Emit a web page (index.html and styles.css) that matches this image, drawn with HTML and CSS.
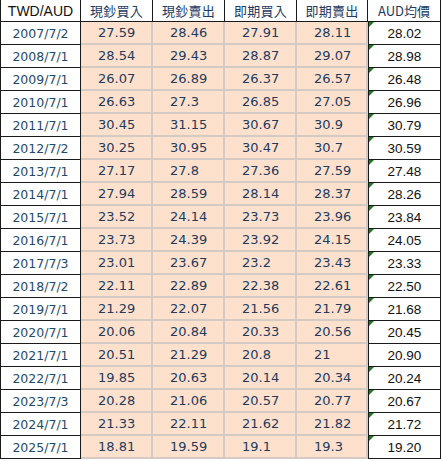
FILE: index.html
```html
<!DOCTYPE html>
<html>
<head>
<meta charset="utf-8">
<link rel="stylesheet" href="styles.css">
</head>
<body>
<table class="rates">
  <colgroup>
    <col class="c-date"><col class="c-num"><col class="c-num"><col class="c-num"><col class="c-num5"><col class="c-avg">
  </colgroup>
  <thead>
    <tr class="head">
      <th class="h-first">TWD/AUD</th>
      <th class="h-cjk">現鈔買入</th>
      <th class="h-cjk">現鈔賣出</th>
      <th class="h-cjk">即期買入</th>
      <th class="h-cjk">即期賣出</th>
      <th class="h-cjk h-last">AUD均價</th>
    </tr>
  </thead>
  <tbody>
    <tr><td class="date">2007/7/2</td><td class="num">27.59</td><td class="num">28.46</td><td class="num">27.91</td><td class="num">28.11</td><td class="avg flag">28.02</td></tr>
    <tr><td class="date">2008/7/1</td><td class="num">28.54</td><td class="num">29.43</td><td class="num">28.87</td><td class="num">29.07</td><td class="avg flag">28.98</td></tr>
    <tr><td class="date">2009/7/1</td><td class="num">26.07</td><td class="num">26.89</td><td class="num">26.37</td><td class="num">26.57</td><td class="avg flag">26.48</td></tr>
    <tr><td class="date">2010/7/1</td><td class="num">26.63</td><td class="num">27.3</td><td class="num">26.85</td><td class="num">27.05</td><td class="avg flag">26.96</td></tr>
    <tr><td class="date">2011/7/1</td><td class="num">30.45</td><td class="num">31.15</td><td class="num">30.67</td><td class="num">30.9</td><td class="avg flag">30.79</td></tr>
    <tr><td class="date">2012/7/2</td><td class="num">30.25</td><td class="num">30.95</td><td class="num">30.47</td><td class="num">30.7</td><td class="avg flag">30.59</td></tr>
    <tr><td class="date">2013/7/1</td><td class="num">27.17</td><td class="num">27.8</td><td class="num">27.36</td><td class="num">27.59</td><td class="avg flag">27.48</td></tr>
    <tr><td class="date">2014/7/1</td><td class="num">27.94</td><td class="num">28.59</td><td class="num">28.14</td><td class="num">28.37</td><td class="avg flag">28.26</td></tr>
    <tr><td class="date">2015/7/1</td><td class="num">23.52</td><td class="num">24.14</td><td class="num">23.73</td><td class="num">23.96</td><td class="avg flag">23.84</td></tr>
    <tr><td class="date">2016/7/1</td><td class="num">23.73</td><td class="num">24.39</td><td class="num">23.92</td><td class="num">24.15</td><td class="avg flag">24.05</td></tr>
    <tr><td class="date">2017/7/3</td><td class="num">23.01</td><td class="num">23.67</td><td class="num">23.2</td><td class="num">23.43</td><td class="avg flag">23.33</td></tr>
    <tr><td class="date">2018/7/2</td><td class="num">22.11</td><td class="num">22.89</td><td class="num">22.38</td><td class="num">22.61</td><td class="avg flag">22.50</td></tr>
    <tr><td class="date">2019/7/1</td><td class="num">21.29</td><td class="num">22.07</td><td class="num">21.56</td><td class="num">21.79</td><td class="avg flag">21.68</td></tr>
    <tr><td class="date">2020/7/1</td><td class="num">20.06</td><td class="num">20.84</td><td class="num">20.33</td><td class="num">20.56</td><td class="avg flag">20.45</td></tr>
    <tr><td class="date">2021/7/1</td><td class="num">20.51</td><td class="num">21.29</td><td class="num">20.8</td><td class="num">21</td><td class="avg">20.90</td></tr>
    <tr><td class="date">2022/7/1</td><td class="num">19.85</td><td class="num">20.63</td><td class="num">20.14</td><td class="num">20.34</td><td class="avg flag">20.24</td></tr>
    <tr><td class="date">2023/7/3</td><td class="num">20.28</td><td class="num">21.06</td><td class="num">20.57</td><td class="num">20.77</td><td class="avg flag">20.67</td></tr>
    <tr><td class="date">2024/7/1</td><td class="num">21.33</td><td class="num">22.11</td><td class="num">21.62</td><td class="num">21.82</td><td class="avg flag">21.72</td></tr>
    <tr><td class="date">2025/7/1</td><td class="num">18.81</td><td class="num">19.59</td><td class="num">19.1</td><td class="num">19.3</td><td class="avg flag">19.20</td></tr>
  </tbody>
</table>
</body>
</html>
```

FILE: styles.css
```css
html, body {
  margin: 0;
  padding: 0;
  background: #ffffff;
}

.rates {
  table-layout: fixed;
  width: 441px;
  border-collapse: separate;
  border-spacing: 0;
}

.c-date { width: 81px; }
.c-num { width: 72px; }
.c-num5 { width: 71px; }
.c-avg { width: 73px; }

.rates th,
.rates td {
  box-sizing: border-box;
  padding: 0;
  white-space: nowrap;
  overflow: hidden;
  vertical-align: middle;
}

.rates .head {
  height: 22px;
}

.rates th {
  background: #ffffff;
  border-right: 1px solid #1a1a1a;
  border-bottom: 1px solid #1a1a1a;
  text-align: center;
  font-weight: normal;
}

.rates .h-first {
  border-left: 1px solid #1a1a1a;
  font-family: "Liberation Sans", Arial, sans-serif;
  font-size: 14px;
  color: #111111;
}

.rates .h-cjk {
  font-family: "Noto Sans CJK TC", "Noto Sans CJK SC", sans-serif;
  font-size: 13px;
  color: #1d3a63;
  letter-spacing: 0.3px;
}

.rates .h-last {
  letter-spacing: 0;
}

.rates tbody tr {
  height: 23px;
}

.rates .date {
  border-left: 1px solid #1a1a1a;
  border-right: 1px solid #1a1a1a;
  border-bottom: 1px solid #1a1a1a;
  text-align: center;
  font-family: "DejaVu Sans", Verdana, sans-serif;
  font-size: 12.5px;
  color: #1f4a6a;
}

.rates .num {
  background: #fde1cd;
  border-right: 2px solid #d5cac3;
  border-bottom: 2px solid #d5cac3;
  text-align: left;
  padding-left: 17px;
  font-family: "DejaVu Sans", Verdana, sans-serif;
  font-size: 13px;
  color: #213b5c;
}

.rates .avg {
  position: relative;
  border-right: 1px solid #1a1a1a;
  border-bottom: 1px solid #1a1a1a;
  border-left: 1px solid #1a1a1a;
  text-align: center;
  font-family: "Liberation Sans", Arial, sans-serif;
  font-size: 13.5px;
  color: #111111;
}

.rates .flag::before {
  content: "";
  position: absolute;
  top: 0;
  left: 0;
  width: 0;
  height: 0;
  border-top: 5px solid #1b7a1b;
  border-right: 5px solid transparent;
}
```
